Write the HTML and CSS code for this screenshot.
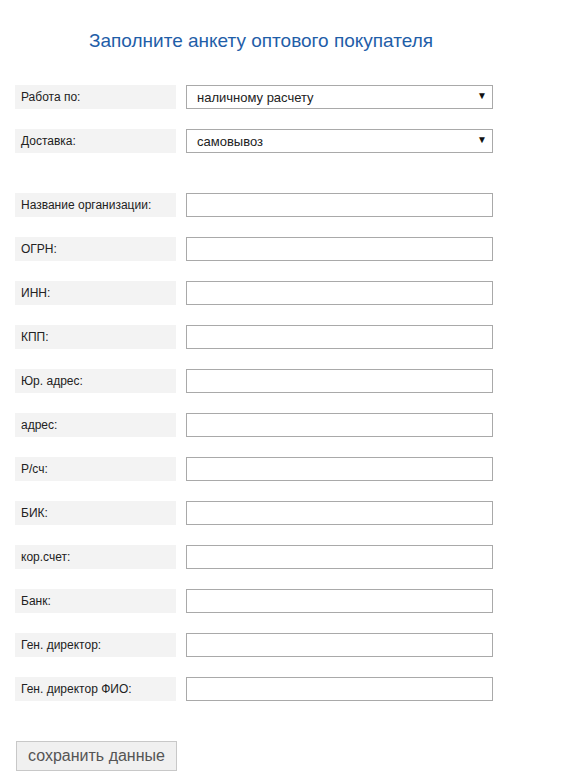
FILE: index.html
```html
<!DOCTYPE html>
<html lang="ru">
<head>
<meta charset="utf-8">
<title>Анкета</title>
<link rel="stylesheet" href="styles.css">
</head>
<body>
<div class="page">
  <h1 class="title">Заполните анкету оптового покупателя</h1>
  <form class="form">
    <div class="group">
      <div class="row">
        <label class="label">Работа по:</label>
        <div class="select-wrap">
          <select class="field select"><option>наличному расчету</option></select>
          <span class="arrow">▼</span>
        </div>
      </div>
      <div class="row">
        <label class="label">Доставка:</label>
        <div class="select-wrap">
          <select class="field select"><option>самовывоз</option></select>
          <span class="arrow">▼</span>
        </div>
      </div>
    </div>
    <div class="group">
      <div class="row"><label class="label">Название организации:</label><input class="field" type="text"></div>
      <div class="row"><label class="label">ОГРН:</label><input class="field" type="text"></div>
      <div class="row"><label class="label">ИНН:</label><input class="field" type="text"></div>
      <div class="row"><label class="label">КПП:</label><input class="field" type="text"></div>
      <div class="row"><label class="label">Юр. адрес:</label><input class="field" type="text"></div>
      <div class="row"><label class="label">адрес:</label><input class="field" type="text"></div>
      <div class="row"><label class="label">Р/сч:</label><input class="field" type="text"></div>
      <div class="row"><label class="label">БИК:</label><input class="field" type="text"></div>
      <div class="row"><label class="label">кор.счет:</label><input class="field" type="text"></div>
      <div class="row"><label class="label">Банк:</label><input class="field" type="text"></div>
      <div class="row"><label class="label">Ген. директор:</label><input class="field" type="text"></div>
      <div class="row"><label class="label">Ген. директор ФИО:</label><input class="field" type="text"></div>
    </div>
    <button class="btn" type="button">сохранить данные</button>
  </form>
</div>
</body>
</html>
```

FILE: styles.css
```css
* { box-sizing: border-box; }
html, body { margin: 0; padding: 0; background: #fff; }
body { font-family: Arial, "Liberation Sans", sans-serif; color: #222; }
.page { padding: 29px 0 0 15px; width: 508px; }
.title {
  margin: 0 0 0 74px;
  font-size: 19px;
  font-weight: normal;
  color: #1f5ea8;
  line-height: 24px;
}
.form { margin-top: 32px; display: flex; flex-direction: column; }
.group { display: flex; flex-direction: column; gap: 20px; margin-bottom: 40px; }
.row { display: flex; align-items: stretch; height: 24px; gap: 10px; }
.label {
  width: 161px;
  background: #f3f3f3;
  font-size: 12px;
  line-height: 24px;
  padding-left: 6px;
  color: #222;
}
.field {
  width: 307px;
  height: 24px;
  border: 1px solid #a9a9a9;
  background: #fff;
  margin: 0;
  padding: 0 10px;
  font-family: Arial, "Liberation Sans", sans-serif;
  font-size: 13px;
  color: #222;
  border-radius: 0;
  outline: none;
}
.select-wrap { position: relative; width: 307px; height: 24px; }
.select { -webkit-appearance: none; appearance: none; width: 100%; }
.arrow {
  position: absolute;
  right: 6px;
  top: 0;
  line-height: 22px;
  font-size: 10px;
  color: #111;
  pointer-events: none;
}
.btn {
  align-self: flex-start;
  width: 161px;
  height: 30px;
  margin-left: 1px;
  background: #f0f0f0;
  border: 1px solid #c8c8c8;
  font-family: Arial, "Liberation Sans", sans-serif;
  font-size: 16px;
  color: #555;
  padding: 0;
  border-radius: 0;
}
```
